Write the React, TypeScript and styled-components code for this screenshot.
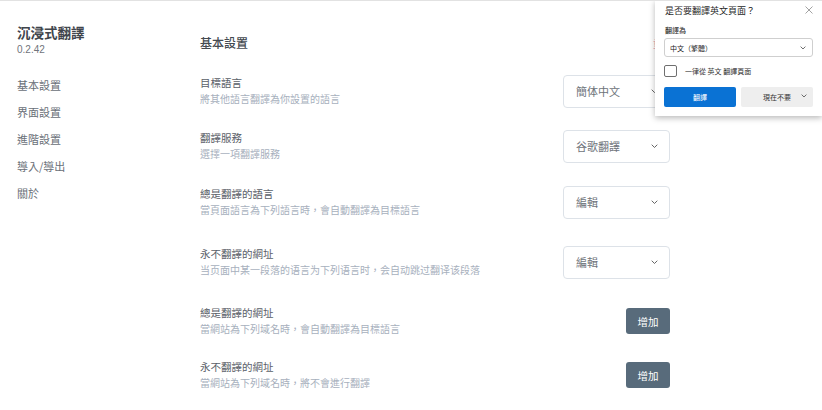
import React from "react";
import styled, { createGlobalStyle } from "styled-components";

const GlobalStyle = createGlobalStyle`
  html, body {
    margin: 0;
    padding: 0;
    background: #fff;
  }
  body {
    font-family: "Noto Sans CJK TC", "Noto Sans", "Liberation Sans", sans-serif;
  }
`;

const Page = styled.div`
  position: relative;
  width: 822px;
  height: 409px;
  border-top: 1px solid #e2e2e2;
  display: flex;
  overflow: hidden;
`;

const Sidebar = styled.aside`
  width: 183px;
  padding: 22px 0 0 17px;
  display: flex;
  flex-direction: column;
`;

const Brand = styled.div`
  font-size: 13.5px;
  line-height: 19px;
  font-weight: 700;
  color: #40454c;
`;

const Version = styled.div`
  margin-top: 1px;
  font-family: "Liberation Sans", sans-serif;
  font-size: 10px;
  line-height: 14px;
  color: #6f747b;
`;

const NavList = styled.ul`
  list-style: none;
  margin: 15px 0 0;
  padding: 0;
`;

const NavItem = styled.li`
  font-size: 11px;
  line-height: 27px;
  color: #6a7078;
`;

const Main = styled.main`
  width: 470px;
  padding-top: 33px;
`;

const SectionHead = styled.div`
  display: flex;
  align-items: center;
  justify-content: space-between;
  height: 18px;
`;

const SectionTitle = styled.h2`
  margin: 0;
  font-size: 12px;
  line-height: 18px;
  font-weight: 500;
  color: #444a51;
`;

const ResetLink = styled.span`
  margin-right: -3px;
  font-size: 10px;
  color: #eaa2b4;
`;

const Row = styled.div<{ $gap: number }>`
  margin-top: ${(p) => p.$gap}px;
  height: 34px;
  display: flex;
  align-items: center;
  justify-content: space-between;
`;

const RowText = styled.div`
  display: flex;
  flex-direction: column;
`;

const Label = styled.div`
  font-size: 10.5px;
  line-height: 16px;
  color: #5a6068;
`;

const Desc = styled.div`
  font-size: 10px;
  line-height: 16px;
  color: #a7b0bd;
`;

const Select = styled.div`
  box-sizing: border-box;
  width: 107px;
  height: 33px;
  padding: 0 11px 0 12px;
  border: 1px solid #dde2e8;
  border-radius: 4px;
  display: flex;
  align-items: center;
  justify-content: space-between;
  font-size: 11px;
  color: #6e737a;
`;

const AddButton = styled.button`
  width: 44px;
  height: 26px;
  border: none;
  border-radius: 3px;
  background: #586b7b;
  color: #fff;
  font-family: inherit;
  font-size: 10.5px;
  padding: 0;
`;

const Popup = styled.div`
  position: absolute;
  top: -1px;
  left: 655px;
  width: 167px;
  box-sizing: border-box;
  padding: 5px 9px 9px 9px;
  background: #fff;
  box-shadow: 0 2px 6px rgba(0, 0, 0, 0.28);
  display: flex;
  flex-direction: column;
`;

const PopupHead = styled.div`
  display: flex;
  justify-content: space-between;
  align-items: flex-start;
`;

const PopupTitle = styled.div`
  font-size: 9px;
  line-height: 12px;
  color: #1f1f1f;
  padding-left: 1px;
`;

const PopupLabel = styled.div`
  margin-top: 8px;
  padding-left: 1px;
  font-size: 7px;
  line-height: 10px;
  font-weight: 500;
  color: #333;
`;

const PopupSelect = styled.div`
  box-sizing: border-box;
  margin-top: 3px;
  height: 19px;
  border: 1px solid #cfcfcf;
  border-radius: 3px;
  padding: 0 6px 0 5px;
  display: flex;
  align-items: center;
  justify-content: space-between;
  font-size: 7px;
  color: #222;
`;

const CheckRow = styled.div`
  margin-top: 8px;
  display: flex;
  align-items: center;
  gap: 8px;
  font-size: 7px;
  color: #333;
`;

const CheckBox = styled.span`
  box-sizing: border-box;
  width: 13px;
  height: 12px;
  border: 1px solid #6f6f6f;
  border-radius: 2px;
`;

const PopupButtons = styled.div`
  margin-top: 10px;
  display: flex;
  gap: 5px;
`;

const PopupButton = styled.div<{ $primary?: boolean }>`
  flex: 1;
  height: 20px;
  display: flex;
  align-items: center;
  justify-content: center;
  position: relative;
  font-size: 7px;
  color: ${(p) => (p.$primary ? "#fff" : "#333")};
  background: ${(p) => (p.$primary ? "#0a72d4" : "#eeeeee")};
  border-radius: 2px;
`;

const ButtonChevron = styled.span`
  position: absolute;
  right: 6px;
  top: 7px;
  display: flex;
`;

const Chevron = ({ w = 7, color = "#555" }: { w?: number; color?: string }) => (
  <svg width={w} height={w * 0.6} viewBox="0 0 10 6" fill="none">
    <polyline points="1,1 5,5 9,1" stroke={color} strokeWidth="1.3" />
  </svg>
);

const CloseIcon = () => (
  <svg width="8" height="8" viewBox="0 0 8 8" style={{ marginTop: 1 }}>
    <path d="M0.5 0.5 L7.5 7.5 M7.5 0.5 L0.5 7.5" stroke="#8a8a8a" strokeWidth="0.8" />
  </svg>
);

const navItems = ["基本設置", "界面設置", "進階設置", "導入/導出", "關於"];

type Setting = {
  label: string;
  desc: string;
  gap: number;
  select?: string;
};

const settings: Setting[] = [
  { label: "目標語言", desc: "將其他語言翻譯為你設置的語言", gap: 22, select: "簡体中文" },
  { label: "翻譯服務", desc: "選擇一項翻譯服務", gap: 21, select: "谷歌翻譯" },
  { label: "總是翻譯的語言", desc: "當頁面語言為下列語言時，會自動翻譯為目標語言", gap: 22, select: "編輯" },
  { label: "永不翻譯的網址", desc: "当页面中某一段落的语言为下列语言时，会自动跳过翻译该段落", gap: 26, select: "編輯" },
  { label: "總是翻譯的網址", desc: "當網站為下列域名時，會自動翻譯為目標語言", gap: 25 },
  { label: "永不翻譯的網址", desc: "當網站為下列域名時，將不會進行翻譯", gap: 20 },
];

const App = () => {
  return (
    <>
      <GlobalStyle />
      <Page>
        <Sidebar>
          <Brand>沉浸式翻譯</Brand>
          <Version>0.2.42</Version>
          <NavList>
            {navItems.map((item) => (
              <NavItem key={item}>{item}</NavItem>
            ))}
          </NavList>
        </Sidebar>

        <Main>
          <SectionHead>
            <SectionTitle>基本設置</SectionTitle>
            <ResetLink>重置</ResetLink>
          </SectionHead>
          {settings.map((s, i) => (
            <Row key={i} $gap={s.gap}>
              <RowText>
                <Label>{s.label}</Label>
                <Desc>{s.desc}</Desc>
              </RowText>
              {s.select ? (
                <Select>
                  <span>{s.select}</span>
                  <Chevron />
                </Select>
              ) : (
                <AddButton>增加</AddButton>
              )}
            </Row>
          ))}
        </Main>

        <Popup>
          <PopupHead>
            <PopupTitle>是否要翻譯英文頁面？</PopupTitle>
            <CloseIcon />
          </PopupHead>
          <PopupLabel>翻譯為</PopupLabel>
          <PopupSelect>
            <span>中文（繁體）</span>
            <Chevron w={6} color="#444" />
          </PopupSelect>
          <CheckRow>
            <CheckBox />
            <span>一律從 英文 翻譯頁面</span>
          </CheckRow>
          <PopupButtons>
            <PopupButton $primary>翻譯</PopupButton>
            <PopupButton>
              現在不要
              <ButtonChevron>
                <Chevron w={6} color="#444" />
              </ButtonChevron>
            </PopupButton>
          </PopupButtons>
        </Popup>
      </Page>
    </>
  );
};

export default App;
